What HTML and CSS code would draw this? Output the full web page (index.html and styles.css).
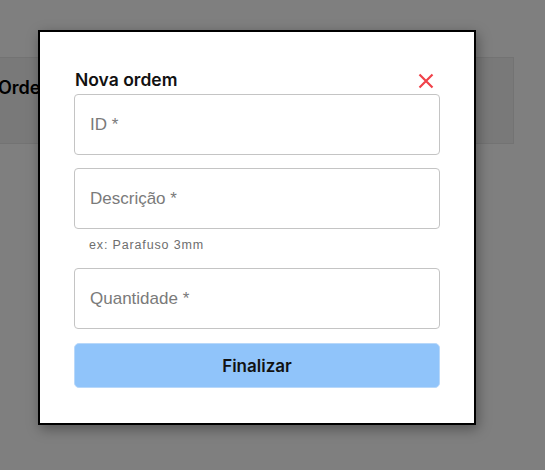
FILE: index.html
```html
<!DOCTYPE html>
<html lang="pt">
<head>
<meta charset="utf-8">
<link rel="stylesheet" href="styles.css">
</head>
<body>
<div class="page">
  <div class="card"><span class="card-title">Ordens</span></div>
</div>
<div class="overlay">
  <div class="modal">
    <div class="modal-head">
      <h2 class="modal-title">Nova ordem</h2>
      <button class="close" aria-label="Fechar">
        <svg width="16" height="16" viewBox="0 0 16 16"><path d="M1.5 1.5 L14.5 14.5 M14.5 1.5 L1.5 14.5" stroke="#f0424a" stroke-width="2.2" fill="none"/></svg>
      </button>
    </div>
    <form class="form">
      <div class="field"><input class="input" placeholder="ID *"></div>
      <div class="field">
        <input class="input" placeholder="Descrição *">
        <p class="helper">ex: Parafuso 3mm</p>
      </div>
      <div class="field"><input class="input" placeholder="Quantidade *"></div>
      <button type="button" class="submit">Finalizar</button>
    </form>
  </div>
</div>
</body>
</html>
```
FILE: styles.css
```css
* { box-sizing: border-box; }
html, body { margin: 0; padding: 0; }
body {
  width: 545px;
  height: 470px;
  background: #ffffff;
  font-family: Inter, "Noto Sans", sans-serif;
  overflow: hidden;
  position: relative;
}
.page {
  padding-top: 57px;
  margin-left: -22px;
}
.card {
  width: 536px;
  height: 87px;
  border: 1px solid #e6e6e6;
  background: #f2f2f2;
  display: flex;
  align-items: flex-start;
  padding-left: 19px;
  padding-top: 19px;
}
.card-title {
  font-size: 18px;
  font-weight: 600;
  color: #000;
  line-height: 22px;
}
.overlay {
  position: absolute;
  inset: 0;
  background: rgba(0, 0, 0, 0.5);
  padding: 30px 0 0 38px;
}
.modal {
  width: 438px;
  height: 395px;
  background: #fff;
  border: 2px solid #000;
  box-shadow: 2px 4px 12px rgba(0, 0, 0, 0.35);
  padding: 36px 34px 0 34px;
}
.modal-head {
  display: flex;
  justify-content: space-between;
  align-items: center;
  height: 24px;
  margin-bottom: 2px;
  padding-left: 1px;
}
.modal-title {
  margin: 0;
  font-size: 17.5px;
  font-weight: 600;
  color: #111;
  line-height: 24px;
}
.close {
  border: 0;
  background: none;
  padding: 0;
  margin-right: 6px;
  margin-top: 1px;
  width: 16px;
  height: 16px;
  display: flex;
}
.form {
  display: flex;
  flex-direction: column;
  gap: 13px;
}
.field { display: flex; flex-direction: column; }
.input {
  width: 366px;
  height: 61px;
  border: 1px solid #c4c4c4;
  border-radius: 4px;
  padding: 0 15px;
  font-family: "Liberation Sans", Arial, sans-serif;
  font-size: 17px;
  color: #333;
  outline: none;
  background: #fff;
}
.input::placeholder { color: #7a7a7a; opacity: 1; }
.helper {
  margin: 6px 0 0 15px;
  font-family: "Liberation Sans", Arial, sans-serif;
  font-size: 12.5px;
  letter-spacing: 0.85px;
  color: #6e6e6e;
  line-height: 20px;
}
.submit {
  margin-top: 1px;
  width: 366px;
  height: 45px;
  border: 1px solid #b8d8fa;
  border-radius: 5px;
  background: #90c4fa;
  font-family: Inter, "Noto Sans", sans-serif;
  font-size: 17px;
  font-weight: 600;
  color: #111;
}
```
